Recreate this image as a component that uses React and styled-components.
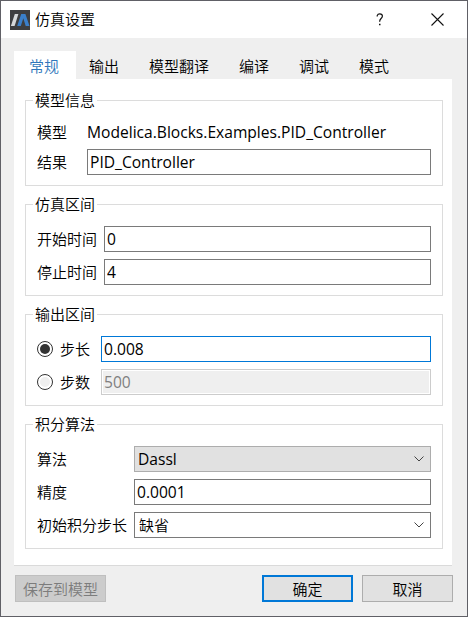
import React from "react";
import styled, { createGlobalStyle, css } from "styled-components";

const GlobalStyle = createGlobalStyle`
  *, *::before, *::after { box-sizing: border-box; }
  body { margin: 0; overflow: hidden; }
  input, button { font: inherit; letter-spacing: inherit; color: inherit; border-radius: 0; outline: none; }
`;

const Dialog = styled.div`
  display: flex;
  flex-direction: column;
  width: 468px;
  height: 617px;
  border: 1px solid #606066;
  background: #efefef;
  color: #000;
  font-family: "Open Sans", "Noto Sans CJK SC", sans-serif;
  font-size: 15px;
  line-height: 20px;
  font-weight: 350;
`;

const TitleBar = styled.header`
  display: flex;
  align-items: center;
  flex: none;
  height: 37px;
  padding-left: 9px;
  background: #fff;
`;

const Title = styled.h1`
  flex: 1;
  margin: 0 0 1px 5px;
  font-size: 15px;
  font-weight: inherit;
`;

const WindowControl = styled.button`
  display: flex;
  align-items: center;
  justify-content: center;
  width: ${(p) => p.$width}px;
  height: 36px;
  padding: 0;
  border: 0;
  background: transparent;
`;

const TabList = styled.nav`
  display: flex;
  flex: none;
  height: 28px;
  margin: 13px 0 0 13px;
`;

const Tab = styled.button`
  height: 28px;
  padding: 2px 15px 0;
  border: 0;
  background: transparent;
  white-space: nowrap;
  ${(p) =>
    p.$selected &&
    css`
      width: 62px;
      margin-right: -2px;
      padding: 2px 17px 0 15px;
      background: #fff;
      color: #2f76bb;
    `}
`;

const Panel = styled.main`
  display: flex;
  flex-direction: column;
  flex: none;
  gap: 18px;
  width: 438px;
  height: 487px;
  margin-left: 13px;
  padding: 21px 9px 0 11px;
  border-bottom: 1px solid #dadada;
  background: #fff;
`;

const Group = styled.section`
  flex: none;
  padding: 0 11px 10px;
  border: 1px solid #dcdcdc;
`;

const Legend = styled.h2`
  width: 64px;
  height: 20px;
  margin: -11px 0 12px -4px;
  padding-left: 2px;
  background: #fff;
  font-size: 15px;
  font-weight: inherit;
  white-space: nowrap;
`;

const Rows = styled.div`
  display: flex;
  flex-direction: column;
  gap: 7px;
`;

const Row = styled.div`
  display: grid;
  grid-template-columns: ${(p) => p.$label}px 1fr;
  align-items: center;
  height: ${(p) => (p.$compact ? 20 : 26)}px;
`;

const Label = styled.label`
  display: flex;
  align-items: center;
  gap: 7px;
  white-space: nowrap;
`;

const Value = styled.span`
  font-size: ${(p) => (p.$latin ? 15.6 : 15)}px;
  font-weight: ${(p) => (p.$latin ? 400 : "inherit")};
  white-space: nowrap;
`;

const TextField = styled.input`
  width: 100%;
  height: 26px;
  padding: 0 2px 1px;
  font-size: 15.6px;
  font-weight: 400;
  border: 1px solid ${(p) => (p.$focused ? "#0078d7" : "#7a7a7a")};
  background: #fff;
  &:disabled {
    border-color: #cccccc;
    background: #efefef;
    box-shadow: inset 0 0 0 1px #fff;
    color: #808080;
  }
`;

const ComboBox = styled.div`
  display: flex;
  align-items: center;
  justify-content: space-between;
  height: 26px;
  padding: 0 6px 0 ${(p) => (p.$filled ? 3 : 4)}px;
  border: 1px solid ${(p) => (p.$filled ? "#adadad" : "#7a7a7a")};
  background: ${(p) => (p.$filled ? "#e1e1e1" : "#fff")};
`;

const RadioMark = styled.span`
  display: grid;
  place-items: center;
  width: 16px;
  height: 16px;
  border: 1px solid #333;
  border-radius: 50%;
  background: #fff;
  &::after {
    content: "";
    width: 10px;
    height: 10px;
    border-radius: 50%;
    background: ${(p) => (p.$checked ? "#333" : "#efefef")};
  }
`;

const Footer = styled.footer`
  display: flex;
  gap: 9px;
  padding: 9px 14px 0;
`;

const PushButton = styled.button`
  width: 91px;
  height: 27px;
  padding: 1px 0 0;
  border: 1px solid #adadad;
  background: #e1e1e1;
  line-height: 20px;
  white-space: nowrap;
  &:first-child { margin-right: auto; }
  &:disabled {
    border-color: #bfbfbf;
    background: #cccccc;
    color: #7c7c7c;
  }
  ${(p) =>
    p.$primary &&
    css`
      padding-top: 0;
      border: 2px solid #0078d7;
    `}
`;

const Logo = () => (
  <svg width="20" height="20" viewBox="0 0 20 20">
    <rect width="20" height="20" fill="#3d3e40" />
    <path d="M4.8 4h3.6L4.6 16H.9z" fill="#d5d8da" />
    <path d="M11.2 4h4.2l4.1 12h-3.8L13.3 8.3 10.8 16H7.2z" fill="#3a7fca" />
  </svg>
);

const HelpIcon = () => (
  <svg width="8" height="13" viewBox="0 0 8 13" fill="none" stroke="#111" strokeWidth="1.2">
    <path d="M1.2 3.4V2.6C1.6 1.3 2.6.8 3.8.8c1.6 0 2.6.9 2.6 2.3 0 2.4-2.7 2.5-2.7 5.1v.5" />
    <path d="M3 11.5h1.5" strokeWidth="1.5" />
  </svg>
);

const CloseIcon = () => (
  <svg width="13" height="13" viewBox="0 0 13 13" stroke="#111" strokeWidth="1.1">
    <path d="M.5.5l12 12M12.5.5l-12 12" />
  </svg>
);

const Chevron = () => (
  <svg width="10" height="6" viewBox="0 0 10 6" fill="none" stroke="#444" strokeWidth="1">
    <path d="M.5.5L5 5 9.5.5" />
  </svg>
);

const tabs = ["常规", "输出", "模型翻译", "编译", "调试", "模式"];

const FieldGroup = ({ title, children }) => (
  <Group>
    <Legend>{title}</Legend>
    <Rows>{children}</Rows>
  </Group>
);

export default function App() {
  return (
    <>
      <GlobalStyle />
      <Dialog>
        <TitleBar>
          <Logo />
          <Title>仿真设置</Title>
          <WindowControl $width={57}><HelpIcon /></WindowControl>
          <WindowControl $width={59}><CloseIcon /></WindowControl>
        </TitleBar>
        <TabList>
          {tabs.map((name, i) => (
            <Tab key={name} $selected={i === 0}>{name}</Tab>
          ))}
        </TabList>
        <Panel>
          <FieldGroup title="模型信息">
            <Row $label={50} $compact>
              <Label>模型</Label>
              <Value $latin>Modelica.Blocks.Examples.PID_Controller</Value>
            </Row>
            <Row $label={50}>
              <Label>结果</Label>
              <TextField defaultValue="PID_Controller" />
            </Row>
          </FieldGroup>
          <FieldGroup title="仿真区间">
            <Row $label={67}>
              <Label>开始时间</Label>
              <TextField defaultValue="0" />
            </Row>
            <Row $label={67}>
              <Label>停止时间</Label>
              <TextField defaultValue="4" />
            </Row>
          </FieldGroup>
          <FieldGroup title="输出区间">
            <Row $label={64}>
              <Label><RadioMark $checked />步长</Label>
              <TextField $focused defaultValue="0.008" />
            </Row>
            <Row $label={64}>
              <Label><RadioMark />步数</Label>
              <TextField disabled defaultValue="500" />
            </Row>
          </FieldGroup>
          <FieldGroup title="积分算法">
            <Row $label={97}>
              <Label>算法</Label>
              <ComboBox $filled><Value $latin>Dassl</Value><Chevron /></ComboBox>
            </Row>
            <Row $label={97}>
              <Label>精度</Label>
              <TextField defaultValue="0.0001" />
            </Row>
            <Row $label={97}>
              <Label>初始积分步长</Label>
              <ComboBox><Value>缺省</Value><Chevron /></ComboBox>
            </Row>
          </FieldGroup>
        </Panel>
        <Footer>
          <PushButton disabled>保存到模型</PushButton>
          <PushButton $primary>确定</PushButton>
          <PushButton>取消</PushButton>
        </Footer>
      </Dialog>
    </>
  );
}
